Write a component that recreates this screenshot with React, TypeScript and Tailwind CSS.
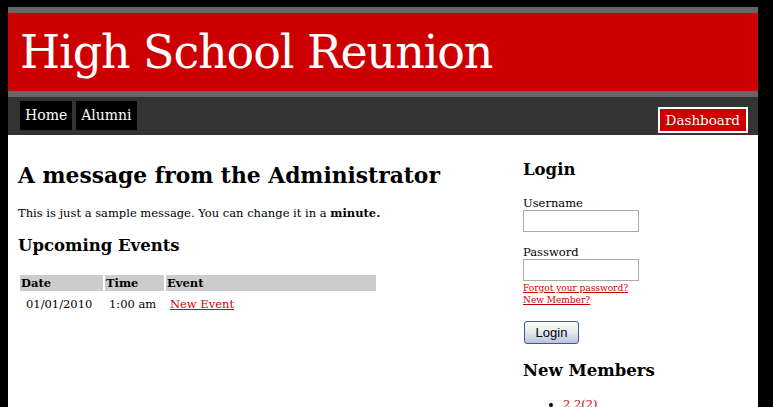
import React from "react";

const serif = { fontFamily: '"DejaVu Serif", Georgia, serif' };

export default function App() {
  return (
    <div className="min-h-[407px] w-[773px] bg-black pt-[7px]" style={serif}>
      <div className="ml-2 w-[750px]">
        <div className="h-[90px] border-y-[6px] border-[#666] bg-[#cc0000] pl-[12px]">
          <div className="pt-[13px] text-[46px] leading-[52px] text-white">
            <span className="tracking-[-1.1px]">High School Reunion</span>
          </div>
        </div>
        <div className="flex h-[38px] items-start bg-[#333] pl-[12px] pr-[10px]">
          <a className="mt-[4px] flex h-[29px] items-center bg-black px-[5px] text-[14px] text-white">Home</a>
          <a className="ml-[4px] mt-[4px] flex h-[29px] items-center bg-black px-[5px] text-[14px] text-white">Alumni</a>
          <a className="ml-auto mt-[10px] flex h-[26px] items-center border-2 border-white bg-[#cc0000] px-[6px] text-[13.5px] text-white">Dashboard</a>
        </div>
        <div className="flex h-[272px] bg-white">
          <div className="w-[505px] pl-[10px] pt-[27px]">
            <h1 className="text-[21.8px] font-bold leading-[28px] text-black">A message from the Administrator</h1>
            <p className="mt-[15px] text-[11.5px] leading-[16px] text-black">
              This is just a sample message. You can change it in a <b>minute.</b>
            </p>
            <h2 className="mt-[14px] text-[16.5px] font-bold leading-[22px] text-black">Upcoming Events</h2>
            <table className="mt-[16px] border-separate border-spacing-[2px] text-[11.5px]">
              <thead>
                <tr>
                  <th className="w-[83px] bg-[#ccc] px-[1px] text-left font-bold leading-[16px]">Date</th>
                  <th className="w-[59px] bg-[#ccc] px-[1px] text-left font-bold leading-[16px]">Time</th>
                  <th className="w-[210px] bg-[#ccc] px-[1px] text-left font-bold leading-[16px]">Event</th>
                </tr>
              </thead>
              <tbody>
                <tr>
                  <td className="px-[6px] pt-[3px] leading-[16px]">01/01/2010</td>
                  <td className="px-[4px] pt-[3px] leading-[16px]">1:00 am</td>
                  <td className="px-[4px] pt-[3px] leading-[16px]">
                    <a className="text-[#cc0000] underline">New Event</a>
                  </td>
                </tr>
              </tbody>
            </table>
          </div>
          <div className="w-[245px] pl-[10px] pt-[24px] text-black">
            <h3 className="text-[16.5px] font-bold leading-[22px]">Login</h3>
            <div className="mt-[15px] text-[11.5px] leading-[14px]">Username</div>
            <input className="block h-[22px] w-[116px] border border-[#aaa] bg-white" />
            <div className="mt-[13px] text-[11.5px] leading-[14px]">Password</div>
            <input className="block h-[22px] w-[116px] border border-[#aaa] bg-white" />
            <a className="mt-[1px] block text-[9px] leading-[12px] text-[#cc0000] underline">Forgot your password?</a>
            <a className="block text-[9px] leading-[12px] text-[#cc0000] underline">New Member?</a>
            <button
              className="ml-[1px] mt-[15px] h-[23px] w-[55px] rounded-[3px] border border-[#3c5a8a] text-[13px] text-black"
              style={{ fontFamily: '"Liberation Sans", Tahoma, sans-serif', background: "linear-gradient(#fff, #e4e8f0 50%, #b7c4dc)" }}
            >
              Login
            </button>
            <h3 className="mt-[16px] text-[16.5px] font-bold leading-[22px]">New Members</h3>
            <ul className="mt-[14px] list-disc pl-[40px] text-[11.5px] leading-[16px]">
              <li>
                <a className="text-[#cc0000]">2 2(2)</a>
              </li>
            </ul>
          </div>
        </div>
      </div>
    </div>
  );
}
